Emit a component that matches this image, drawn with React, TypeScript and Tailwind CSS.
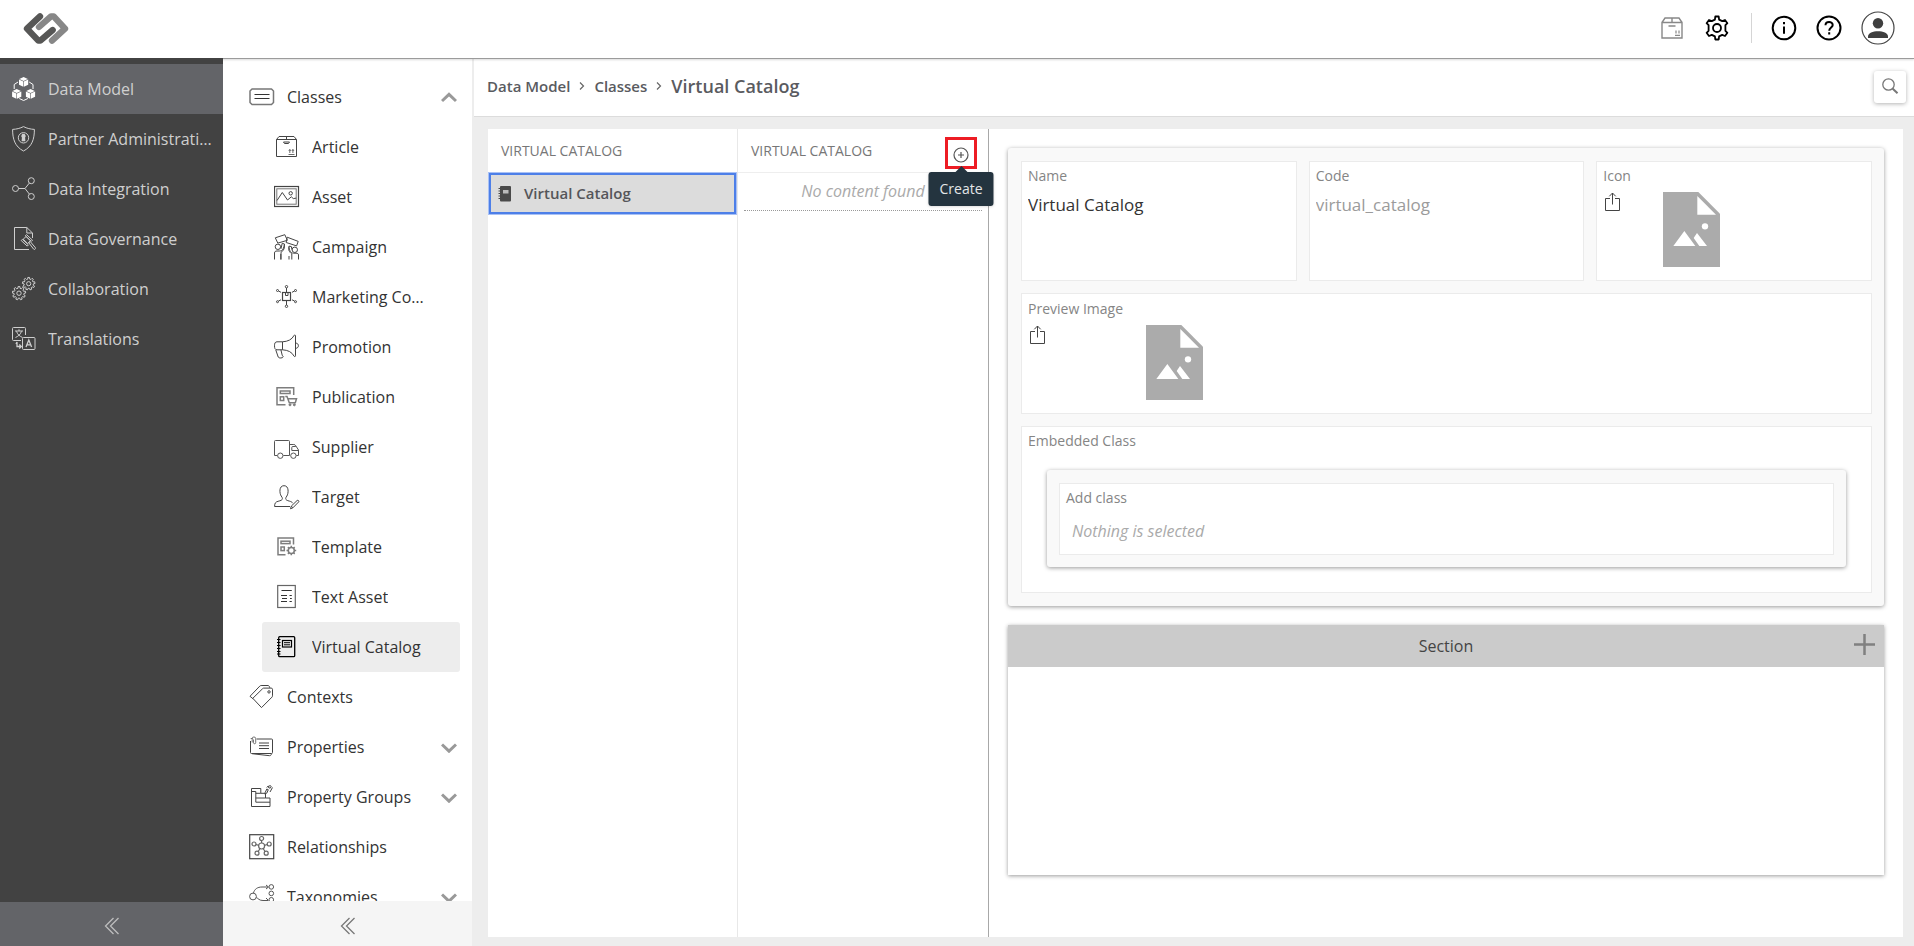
import { useState } from "react";
import type { ReactNode } from "react";

const FONT = "font-['Open_Sans','Noto_Sans',sans-serif]";

function gearPath(cx: number, cy: number, outer: number, inner: number, teeth: number) {
  const points: string[] = [];
  const step = (Math.PI * 2) / teeth;
  for (let i = 0; i < teeth; i++) {
    const a = i * step - Math.PI / 2;
    const corners: [number, number][] = [
      [inner, a - step * 0.3],
      [outer, a - step * 0.2],
      [outer, a + step * 0.2],
      [inner, a + step * 0.3],
    ];
    for (const [r, t] of corners) {
      points.push(`${(cx + r * Math.cos(t)).toFixed(2)} ${(cy + r * Math.sin(t)).toFixed(2)}`);
    }
  }
  return `M${points.join("L")}Z`;
}

function Glyph({ children, className = "text-[#444]" }: { children: ReactNode; className?: string }) {
  return (
    <svg
      viewBox="0 0 26 26"
      fill="none"
      stroke="currentColor"
      strokeWidth="1"
      aria-hidden="true"
      className={`h-[26px] w-[26px] shrink-0 ${className}`}
    >
      {children}
    </svg>
  );
}

function NavGlyph({ children }: { children: ReactNode }) {
  return (
    <svg viewBox="0 0 24 26" fill="none" stroke="currentColor" strokeWidth="1" aria-hidden="true" className="h-[26px] w-6 shrink-0">
      {children}
    </svg>
  );
}

/* ---------- main navigation icons ---------- */

function Cube({ x, y }: { x: number; y: number }) {
  return (
    <g stroke="none" fill="#fff">
      <path d={`M${x} ${y - 5}l4.2 1.9l-4.2 2l-4.2-2z`} />
      <path d={`M${x - 4.6} ${y - 2.5}l4.3 2v5.2l-4.3-2z`} />
      <path d={`M${x + 4.6} ${y - 2.5}l-4.3 2v5.2l4.3-2z`} />
    </g>
  );
}

const DataModelIcon = () => (
  <NavGlyph>
    <g stroke="#fff">
      <path d="M6 6L2.200 8.500V13M17.200 6l3.800 2.500V13M7.300 22.500L11.600 24.500l4.300-2" />
    </g>
    <Cube x={11.6} y={6} />
    <Cube x={4.7} y={18} />
    <Cube x={18.5} y={18} />
  </NavGlyph>
);

const PartnerIcon = () => (
  <NavGlyph>
    <path d="M11.5 .6C8 2.400 4.500 3.200 .6 3.400C.6 13 2.800 20.500 11.500 25C20.200 20.500 22.400 13 22.400 3.400C18.500 3.200 15 2.400 11.500 .6Z" />
    <circle cx="11.5" cy="11.8" r="5.2" />
    <path d="M11.5 7.8a2.200 2.200 0 0 1 1.600 3.700l.3 3.800h-3.800l.3-3.800a2.200 2.200 0 0 1 1.600-3.700z" fill="currentColor" stroke="none" />
  </NavGlyph>
);

const IntegrationIcon = () => (
  <NavGlyph>
    <circle cx="3.5" cy="12.5" r="3" />
    <circle cx="19.3" cy="4.7" r="3" />
    <circle cx="19.3" cy="20.5" r="3" />
    <path d="M6.5 12.5H13l4.300-5.400M13 12.5l4.300 5.500" />
  </NavGlyph>
);

const GovernanceIcon = () => (
  <NavGlyph>
    <path d="M20.5 12V7L14.800 1.500H2.500v22H17" />
    <path d="M14.800 1.500V7h5.700" />
    <path d="M13.300 9.800l1.200-1.200 6 5.600-1.200 1.200zM9.200 14.500l1.200-1.200 6 5.600-1.200 1.200zM11.200 13.200l2.900-2.700 4.400 4.200-2.900 2.800zM16.800 16.800l1.400-1.300 5.200 6.200c.8 1-.9 2.400-1.800 1.400z" />
  </NavGlyph>
);

const CollaborationIcon = () => (
  <NavGlyph>
    <path d={gearPath(7, 17.2, 6.7, 5, 9)} />
    <circle cx="7" cy="17.2" r="2.2" />
    <path d={gearPath(16.7, 7.7, 6.3, 4.7, 9)} />
    <circle cx="16.7" cy="7.7" r="2.1" />
  </NavGlyph>
);

const TranslationsIcon = () => (
  <NavGlyph>
    <path d="M13.500 9V2.500a1 1 0 0 0-1-1h-11a1 1 0 0 0-1 1v11a1 1 0 0 0 1 1H9" />
    <rect x="10.5" y="11.5" width="12.5" height="12" rx="1" />
    <path d="M3 5h8M7 3.300V5M4.500 5.200c.8 3 3 5 6 6.300M9.500 5.200c-.8 3-3 5-6 6.300" />
    <path d="M14 21l2.800-7 2.800 7M15 18.800h3.600" strokeWidth="1.3" />
    <path d="M5 16v4.500h3.500M7.300 18.500l2 2-2 2M5 16l-1 2" strokeWidth="1.3" />
  </NavGlyph>
);

/* ---------- class tree icons ---------- */

const ClassesIcon = () => (
  <Glyph>
    <path d="M3 5h19.500l2 2v11.500l-2 2H3l-2-2V7z" stroke="#777" strokeWidth="1.5" strokeLinejoin="round" />
    <path d="M5.500 10.500h15M5.500 14.500h15" stroke="#333" />
  </Glyph>
);

const ArticleIcon = () => (
  <Glyph>
    <path d="M2.500 5.500h20v17h-20zM2.500 5.500L5 2.500h15l2.500 3M12.500 2.500v3" />
    <path d="M9.500 8h6l-1 1.500h-4z" />
    <path d="M14.500 20.500h6M15.800 19v-3.500M18.900 19v-3.500M14.800 16.800l1-1.300 1 1.300M17.900 16.800l1-1.300 1 1.300" strokeWidth=".8" />
  </Glyph>
);

const AssetIcon = () => (
  <Glyph>
    <rect x=".5" y="2.5" width="24" height="20" strokeWidth="1.2" />
    <rect x="2.8" y="4.8" width="19.4" height="15.4" stroke="#777" />
    <path d="M3 16.500L8.300 8.500l5.200 7.500 3.800-3.200 2 1.800 3-.5" />
    <circle cx="16.7" cy="9.3" r="1.7" />
  </Glyph>
);

const CampaignIcon = () => (
  <Glyph>
    <path d="M1.300 3.800L10.800 .7l2.600 5.600-9.600 2.800zM13.200 3.200l11 4.200-1.600 4.500-10.400-3.400z" />
    <circle cx="3.9" cy="12.8" r="2.7" />
    <circle cx="20.8" cy="15.8" r="2.7" />
    <path d="M.5 25.500V19c0-1.500 1-2 2.500-2h2.500c3 0 4.300-2.500 5-7l-2.300-.7-1.200 5.500M10.300 10.500c.6 3.500-.5 6-3.300 7.800v7.200" />
    <path d="M24.500 25.500V21c0-1.500-1-1.800-2.500-1.800h-2.500c-2.700 0-4.300-2.500-4.500-7l2.300 .3 .7 3.200M15 12.500c-1.200 3 .3 5.500 2.800 7.500v5.500" />
    <path d="M6.800 20v5.500M15 22v3.500" />
  </Glyph>
);

const MarketingIcon = () => (
  <Glyph>
    <rect x="8.5" y="8.5" width="8" height="8" strokeWidth="1.2" />
    <path d="M11.500 9v2.500h2.500V9M12.500 8V4M12.500 17v4M7 8.300L4.500 7M18 8.300L20.500 7M7 15.800L4.500 17M18 15.800l2.500 1.200" />
    <circle cx="12.5" cy="2.7" r="1.2" />
    <circle cx="12.5" cy="22.3" r="1.2" />
    <circle cx="3.5" cy="6.5" r="1" />
    <circle cx="21.5" cy="6.5" r="1" />
    <circle cx="3.5" cy="17.7" r="1" />
    <circle cx="21.5" cy="17.7" r="1" />
  </Glyph>
);

const PromotionIcon = () => (
  <Glyph>
    <path d="M8.500 7.800H3C1 7.800 .5 9.500 .5 11.800S1 15.800 3 15.800h5.500zM8.500 7.800C14 7.500 18 5.500 20 1.500c.3-.7 1.500-.8 1.500 .3v20c0 1-1.200 1-1.500 .3-2-4-6-6-11.500-6.300" />
    <path d="M21.700 9c1.700 .3 2.700 1.200 2.700 2.700s-1 2.400-2.700 2.700M1.800 16l2.400 7c.4 1.500 5 1.300 5-.3l-1-1.500-1.300-5.400" />
  </Glyph>
);

const PublicationIcon = () => (
  <Glyph className="text-[#7d7d7d]">
    <g strokeWidth="1.5">
      <path d="M19.700 11V3.800H3v17h8.500" />
      <rect x="6.3" y="7" width="9.7" height="2.5" />
      <rect x="6.3" y="12.8" width="3.4" height="3.7" />
      <path d="M11.300 12.500h1.700l2.300 6.200h6l1.200-4H14" />
    </g>
    <circle cx="16" cy="20.8" r="1" fill="currentColor" />
    <circle cx="20.3" cy="20.8" r="1" fill="currentColor" />
  </Glyph>
);

const SupplierIcon = () => (
  <Glyph className="text-[#555]">
    <path d="M3.300 21.500H.5V7.500c0-.7 .3-1 1-1h13c.7 0 1 .3 1 1v14H9.300M15.500 10.500h4.300c1 0 1.500 .5 2 1.300l2.700 4.200v5.500h-2.200M21.800 12.500h-3c-.7 0-1 .3-1 1v3h6.700" />
    <circle cx="6.3" cy="21.7" r="2.7" />
    <circle cx="19.4" cy="21.7" r="2.7" />
  </Glyph>
);

const TargetIcon = () => (
  <Glyph>
    <path d="M16 22.500H.6c0-3.500 1-4.500 3.500-5.200 2.600-.7 4.300-1.200 4.300-2.700 0-1-.5-1.500-1.200-2.600C5.500 9.500 4.700 1.700 10 1.700S14.500 9.500 12.900 12c-.7 1.100-1.200 1.600-1.200 2.600 0 1.300 1.300 1.900 3.600 2.500 1.800 .5 3 1 3.200 2" />
    <path d="M16.500 24.800l.8-2.700 5.800-5.600c1-.7 2.200 .5 1.600 1.400l-5.800 5.900zM17.300 22.100l1.600 1.700" />
  </Glyph>
);

const TemplateIcon = () => (
  <Glyph className="text-[#7d7d7d]">
    <g strokeWidth="1.5">
      <path d="M19.500 10.500V4H4v16.700h7.500" />
      <rect x="7" y="7.2" width="9" height="2.4" />
      <rect x="7" y="13" width="3.3" height="3.6" />
      <circle cx="17.3" cy="16.5" r="3" />
      <path d="M17.300 11.700v2M17.300 19.300v2M12.500 16.500h2M20.200 16.500h2M13.900 13.100l1.400 1.400M19.300 18.500l1.400 1.400M20.700 13.100l-1.400 1.400M15.300 18.500l-1.400 1.400" />
    </g>
  </Glyph>
);

const TextAssetIcon = () => (
  <Glyph>
    <rect x="3.7" y="1.5" width="17.6" height="22" stroke="#666" strokeWidth="1.2" />
    <path d="M7.500 6.500h10.300M7 11.500h6M15.500 11.500h2.300M8 14.500h5M16 14.500h1.800M7 17.500h6M15.500 17.500h2.300" stroke="#333" />
  </Glyph>
);

const CatalogIcon = () => (
  <Glyph className="text-black">
    <rect x="4.7" y="2.7" width="16" height="20" rx="1" strokeWidth="1.3" />
    <rect x="8.5" y="6.5" width="9" height="6.5" strokeWidth="1.2" />
    <path d="M10 8.700h6M10 10.800h6M3 5.500h3.500M3 8.500h3.500M3 11.500h3.500M3 14.500h3.500M3 17.500h3.500M3 20h3.500" />
  </Glyph>
);

const ContextsIcon = () => (
  <Glyph>
    <path d="M12.500 23.600L3.800 14.300 13.700 4.600c.4-.4 .7-.5 1.200-.5h7.300c.8 0 1.300 .5 1.300 1.200v6.500c0 .5-.2 1-.5 1.300z" />
    <path d="M4.300 15L1 12.300 10.800 2.100c.5-.4 .8-.6 1.300-.6h7c.8 0 1.200 .6 1.700 2.300" />
    <circle cx="20" cy="7.9" r="1.2" />
  </Glyph>
);

const PropertiesIcon = () => (
  <Glyph>
    <path d="M7.500 5h15c.7 0 1 .3 1 1v12.500c0 .7-.3 1-1 1h-20c-.7 0-1-.3-1-1V7" />
    <path d="M3 19.700l17.500 2c1 .1 1.700-.5 2-2" />
    <path d="M10 9h10M10 11.700h10M10 14.500h10" />
    <path d="M3.200 8.500V4.700a1.700 1.700 0 0 1 3.500 0v4.100c0 1.300-2.200 1.300-2.200 0V5.500M1.700 4.500h2" stroke="#666" strokeWidth=".9" />
  </Glyph>
);

const PropertyGroupsIcon = () => (
  <Glyph>
    <path d="M2.500 22.500v-18h9.300v4.800h4.700v4.700h4.500v8.500zM2.500 7.500h4.300v10.700H21M6.800 9.300h5M6.800 14h9.700" />
    <path d="M16.200 8.500l1.600-3.500 1.500 .7-1.500 3.400-1.900 1zM19 3l2-1.500 1.300 1-1.200 1.800zM21 8l2.500-4.500M17.800 3.500l1.500-1.700" />
  </Glyph>
);

const RelationshipsIcon = () => (
  <Glyph>
    <rect x=".7" y=".7" width="24" height="24" strokeWidth="1.2" />
    <g stroke="#666" strokeWidth="1.2">
      <circle cx="12.6" cy="12" r="3" />
      <circle cx="12.6" cy="4.5" r="2" />
      <circle cx="5" cy="10" r="2" />
      <circle cx="20.2" cy="10" r="2" />
      <circle cx="8" cy="19.2" r="2" />
      <circle cx="17.2" cy="19.2" r="2" />
      <path d="M12.600 6.500V9M7 10.500l2.700 .8M18.200 10.500l-2.700 .8M9.200 17.500l1.700-2.700M16 17.500l-1.700-2.700" />
    </g>
  </Glyph>
);

const TaxonomiesIcon = () => (
  <Glyph className="text-[#555]">
    <circle cx="4" cy="12.5" r="3.4" />
    <circle cx="22.3" cy="2.9" r="2.3" />
    <circle cx="22.3" cy="9.4" r="2.3" />
    <circle cx="22.3" cy="15.8" r="2.3" />
    <path d="M4.500 9C5.500 5 8.500 3 13 3h6M17 1l2.500 2L17 5M7.400 13.500c2 1 2.600 3 6.600 3h5M17 14l2.500 2.500" />
  </Glyph>
);

const Chevron = ({ up = false }: { up?: boolean }) => (
  <svg viewBox="0 0 16 12" className="h-3 w-4" fill="none" stroke="#999" strokeWidth="3" aria-hidden="true">
    <path d={up ? "M1 10L8 3.300L15 10" : "M1 3.500L8 10.200L15 3.500"} />
  </svg>
);

const DoubleChevron = ({ className }: { className: string }) => (
  <svg viewBox="0 0 16 18" className={`h-[18px] w-4 ${className}`} fill="none" stroke="currentColor" strokeWidth="1.3" aria-hidden="true">
    <path d="M9.500 1L1.500 9l8 8M14.500 1L6.500 9l8 8" />
  </svg>
);

const UploadIcon = () => (
  <svg viewBox="0 0 16 20" className="h-5 w-4" fill="none" stroke="#444" strokeWidth="1" aria-hidden="true">
    <path d="M5 6.500H.5V18.500h14V6.500H10" />
    <path d="M7.500 12.500V1M4.300 4.300L7.500 1l3.200 3.300" />
  </svg>
);

const ImagePlaceholder = () => (
  <svg viewBox="0 0 171 225" className="h-[75px] w-[57px]" aria-hidden="true">
    <path d="M0 0H106L171 65V225H0Z" fill="#ababab" />
    <path d="M103 12V68H159Z" fill="#fff" />
    <path d="M31 162L64 117L97 162ZM92 138L102 123L132 162H109Z" fill="#fff" />
    <circle cx="126" cy="103" r="9.5" fill="#fff" />
  </svg>
);

/* ---------- page parts ---------- */

const mainNav = [
  { label: "Data Model", Icon: DataModelIcon },
  { label: "Partner Administration", Icon: PartnerIcon },
  { label: "Data Integration", Icon: IntegrationIcon },
  { label: "Data Governance", Icon: GovernanceIcon },
  { label: "Collaboration", Icon: CollaborationIcon },
  { label: "Translations", Icon: TranslationsIcon },
];

const classItems = [
  { label: "Article", Icon: ArticleIcon },
  { label: "Asset", Icon: AssetIcon },
  { label: "Campaign", Icon: CampaignIcon },
  { label: "Marketing Content", Icon: MarketingIcon },
  { label: "Promotion", Icon: PromotionIcon },
  { label: "Publication", Icon: PublicationIcon },
  { label: "Supplier", Icon: SupplierIcon },
  { label: "Target", Icon: TargetIcon },
  { label: "Template", Icon: TemplateIcon },
  { label: "Text Asset", Icon: TextAssetIcon },
  { label: "Virtual Catalog", Icon: CatalogIcon },
];

const groups = [
  { label: "Contexts", Icon: ContextsIcon, expandable: false },
  { label: "Properties", Icon: PropertiesIcon, expandable: true },
  { label: "Property Groups", Icon: PropertyGroupsIcon, expandable: true },
  { label: "Relationships", Icon: RelationshipsIcon, expandable: false },
  { label: "Taxonomies", Icon: TaxonomiesIcon, expandable: true },
];

function TopBar() {
  return (
    <header className="relative z-10 flex h-[59px] shrink-0 items-center justify-between border-b border-[#9b9b9b] bg-white pr-[19px] pb-[2px] pl-[23px] shadow-[0_1px_2px_rgba(0,0,0,0.15)]">
      <a href="#home" aria-label="Home">
        <svg viewBox="68 33 138 99" className="h-[33px] w-[46px]" fill="none" strokeWidth="19" strokeLinejoin="round" strokeLinecap="round" aria-hidden="true">
          <path d="M155 119L194 83L160 46H152L116 78" stroke="#878787" />
          <path d="M119 46L80 83L114 119H120L157 87" stroke="#575756" />
        </svg>
      </a>
      <div className="flex items-center">
        <button aria-label="Packages" className="mr-[21px]">
          <svg viewBox="0 0 22 22" className="h-[22px] w-[22px]" fill="none" stroke="#888" strokeWidth="1.4" aria-hidden="true">
            <path d="M1 5.500h20V21H1zM1 5.500L4 1h14l3 4.500M11 1v4.500M7.500 9h7" />
            <path d="M14 18.300h5M15 16.500v-3M18 16.500v-3" strokeWidth="1.2" />
          </svg>
        </button>
        <button aria-label="Settings" className="mr-[21px]">
          <svg viewBox="0 0 26 26" className="h-[26px] w-[26px]" fill="none" stroke="#000" strokeWidth="1.8" strokeLinejoin="round" aria-hidden="true">
            <path d="M10.900 4.600L11.300 1.500h3.400l.4 3.100 3.100 1.500 2.800-1.100 2.400 3.200-2 2v5.600l2 2-2.400 3.200-2.800-1.100-3.100 1.500-.4 3.100h-3.400l-.4-3.100-3.100-1.500L5 21l-2.400-3.200 2-2v-5.600l-2-2L5 5l2.800 1.100z" />
            <circle cx="13" cy="13" r="4" />
          </svg>
        </button>
        <span className="mr-[19px] h-[30px] w-px bg-[#d5d5d5]" />
        <button aria-label="Information" className="mr-[19px]">
          <svg viewBox="0 0 26 26" className="h-[26px] w-[26px]" fill="none" stroke="#000" strokeWidth="2" aria-hidden="true">
            <circle cx="13" cy="13" r="11.3" />
            <path d="M13 11.500v7.200M13 7v2.200" />
          </svg>
        </button>
        <button aria-label="Help" className="mr-[19px]">
          <svg viewBox="0 0 26 26" className="h-[26px] w-[26px]" fill="none" stroke="#000" strokeWidth="2" aria-hidden="true">
            <circle cx="13" cy="13" r="11.5" />
            <path d="M9.500 10.300c0-4.600 7.200-4.400 7.200-.3 0 2.500-3.500 2.600-3.500 5.800M13.200 17.200v2.300" />
          </svg>
        </button>
        <button aria-label="Account">
          <svg viewBox="0 0 34 34" className="h-[34px] w-[34px]" aria-hidden="true">
            <circle cx="17" cy="17" r="16" fill="#fff" stroke="#444" strokeWidth="1.2" />
            <circle cx="17" cy="12.2" r="5.2" fill="#3f3f3f" />
            <path d="M7 27v-1.500c0-7 20-7 20 0V27z" fill="#3f3f3f" />
          </svg>
        </button>
      </div>
    </header>
  );
}

function MainNav() {
  return (
    <nav aria-label="Main" className="z-20 -mt-px flex w-[223px] shrink-0 flex-col justify-between bg-[#424242]">
      <ul className="pt-[6px]">
        {mainNav.map(({ label, Icon }, i) => (
          <li key={label}>
            <a href="#nav" className={`flex h-[50px] items-center gap-3 pr-2 pl-3 text-base text-[#cfcfcf] ${i === 0 ? "bg-[#636468]" : ""}`}>
              <Icon />
              <span className="truncate">{label}</span>
            </a>
          </li>
        ))}
      </ul>
      <button aria-label="Collapse main navigation" className="flex h-11 items-center justify-center bg-[#636468] pt-1">
        <DoubleChevron className="text-[#bdbdbd]" />
      </button>
    </nav>
  );
}

function TreeNav() {
  return (
    <nav aria-label="Data model" className="flex w-[249px] shrink-0 flex-col bg-white text-base text-[#333]">
      <div className="min-h-0 flex-1 overflow-hidden pt-[13px] pr-3">
        <button className="flex h-[50px] w-full items-center gap-3 pr-[3px] pl-[26px]">
          <ClassesIcon />
          <span className="flex-1 text-left">Classes</span>
          <Chevron up />
        </button>
        <ul className="pl-[39px]">
          {classItems.map(({ label, Icon }) => (
            <li key={label}>
              <a
                href="#class"
                className={`flex h-[50px] items-center gap-3 rounded-[3px] pr-8 pl-3 ${label === "Virtual Catalog" ? "bg-[#ededed]" : ""}`}
              >
                <Icon />
                <span className="truncate">{label}</span>
              </a>
            </li>
          ))}
        </ul>
        {groups.map(({ label, Icon, expandable }) => (
          <button key={label} className="flex h-[50px] w-full items-center gap-3 pr-[3px] pl-[26px]">
            <Icon />
            <span className="flex-1 text-left">{label}</span>
            {expandable && <Chevron />}
          </button>
        ))}
      </div>
      <button aria-label="Collapse tree" className="flex h-[45px] shrink-0 items-center justify-center bg-[#f5f5f5] pt-1">
        <DoubleChevron className="text-[#777]" />
      </button>
    </nav>
  );
}

const CrumbArrow = () => (
  <svg viewBox="0 0 6 10" className="h-[10px] w-[6px]" fill="none" stroke="#666" strokeWidth="1.2" aria-hidden="true">
    <path d="M1 1.500L4.500 5L1 8.500" />
  </svg>
);

function Breadcrumbs() {
  return (
    <div className="flex h-[58px] shrink-0 items-center justify-between border-b border-[#dcdcdc] bg-white pr-2 pb-[2px] pl-[13px]">
      <nav aria-label="Breadcrumb" className="flex items-center gap-[9px] pb-px font-semibold text-[#5a5b5f]">
        <a href="#data-model" className="text-[15px]">Data Model</a>
        <CrumbArrow />
        <a href="#classes" className="text-[15px]">Classes</a>
        <CrumbArrow />
        <h1 className="text-lg">Virtual Catalog</h1>
      </nav>
      <button aria-label="Search" className="flex h-8 w-8 items-center justify-center rounded-[3px] bg-white pb-px shadow-[0_1px_4px_rgba(0,0,0,0.3)]">
        <svg viewBox="0 0 18 18" className="h-[18px] w-[18px]" fill="none" stroke="#777" aria-hidden="true">
          <circle cx="7.5" cy="7.5" r="5.7" strokeWidth="1.3" />
          <path d="M11.500 11.500l5 4.800" strokeWidth="2" />
        </svg>
      </button>
    </div>
  );
}

const COLUMN_TITLE = "flex h-[43px] items-center pt-px text-sm text-[#777]";

function ClassColumns() {
  return (
    <>
      <section className="flex w-[250px] shrink-0 flex-col border-r border-[#e8e8e8]">
        <h2 className={`${COLUMN_TITLE} pl-[13px]`}>VIRTUAL CATALOG</h2>
        <div className="px-px pt-px">
          <button className="flex h-[41px] w-full items-center border-2 border-[#4d7fe8] bg-[#dcdcdc] pl-[7px] text-left text-[15px] font-semibold text-[#55565a] outline outline-[#a9c1f5]">
            <svg viewBox="0 0 14 16" className="mr-3 h-4 w-[14px]" aria-hidden="true">
              <rect x="2" y="0" width="11" height="15.5" rx="1" fill="#4a4a4a" />
              <rect x="5" y="4" width="5.5" height="3.5" fill="#bbb" />
              <path d="M.5 2.500h2M.5 5h2M.5 7.500h2M.5 10h2M.5 12.500h2" stroke="#4a4a4a" />
            </svg>
            Virtual Catalog
          </button>
        </div>
      </section>
      <section className="w-[251px] shrink-0 border-r border-[#a8a8a8]">
        <div className="flex h-[44px] items-start justify-between border-b border-[#eee] pr-[11px] pl-[13px]">
          <h2 className={COLUMN_TITLE}>VIRTUAL CATALOG</h2>
          <div className="relative mt-2 border-3 border-[#ed1c24]">
            <button aria-label="Create" aria-describedby="create-tip" className="flex h-[26px] w-[26px] items-center justify-center pt-1">
              <svg viewBox="0 0 16 16" className="h-4 w-4" fill="none" stroke="#555" aria-hidden="true">
                <circle cx="8" cy="8" r="7" strokeWidth="1.2" />
                <path d="M8 5v6M5 8h6" strokeWidth="1.2" />
              </svg>
            </button>
            <div id="create-tip" role="tooltip" className="absolute top-8 left-1/2 z-30 -translate-x-1/2 rounded-[3px] bg-[#24343f] px-[11px] py-[7px] text-sm font-medium text-[#e3e6e8] shadow-sm">
              <span className="absolute -top-[6px] left-1/2 h-0 w-0 -translate-x-1/2 border-x-[7px] border-b-[7px] border-x-transparent border-b-[#24343f]" />
              Create
            </div>
          </div>
        </div>
        <p className="mx-[6px] flex h-[38px] items-center justify-center border-b border-dotted border-[#999] pb-[2px] text-base text-[#aaa] italic">
          No content found
        </p>
      </section>
    </>
  );
}

const BOX = "border border-[#ebebeb] bg-white px-[6px] pt-1";
const LABEL = "block text-sm leading-5 text-[#858585]";
const CARD = "rounded-[3px] bg-[#f9f9f9] shadow-[0_1px_4px_rgba(0,0,0,0.4)]";
const FIELD = "mt-[7px] block h-6 w-full bg-transparent text-[17px] outline-none";

function Details() {
  const [name, setName] = useState("Virtual Catalog");
  return (
    <section className="min-w-0 flex-1 p-[19px]">
      <div className={`${CARD} p-[13px] pr-3`}>
        <div className="grid grid-cols-3 gap-3">
          <div className={`${BOX} h-[120px]`}>
            <label htmlFor="class-name" className={LABEL}>Name</label>
            <input
              id="class-name"
              value={name}
              onChange={(e) => setName(e.target.value)}
              className={`${FIELD} text-[#333]`}
            />
          </div>
          <div className={`${BOX} h-[120px]`}>
            <label htmlFor="class-code" className={LABEL}>Code</label>
            <input id="class-code" value="virtual_catalog" readOnly className={`${FIELD} text-[#9b9b9b]`} />
          </div>
          <div className={`${BOX} h-[120px]`}>
            <span className={LABEL}>Icon</span>
            <div className="mt-[6px] flex items-start gap-[42px] pl-[2px]">
              <button aria-label="Upload icon"><UploadIcon /></button>
              <ImagePlaceholder />
            </div>
          </div>
          <div className={`${BOX} col-span-3 h-[121px]`}>
            <span className={`${LABEL} pt-px`}>Preview Image</span>
            <div className="mt-[6px] flex items-start gap-[100px] pl-[2px]">
              <button aria-label="Upload preview image"><UploadIcon /></button>
              <ImagePlaceholder />
            </div>
          </div>
          <div className={`${BOX} col-span-3 pb-[25px]`}>
            <span className={LABEL}>Embedded Class</span>
            <div className={`${CARD} mx-[19px] mt-[19px] px-3 pt-[13px] pb-3`}>
              <div className={`${BOX} pb-[11px]`}>
                <span className={LABEL}>Add class</span>
                <p className="mt-[11px] pl-[6px] text-base text-[#aaa] italic">Nothing is selected</p>
              </div>
            </div>
          </div>
        </div>
      </div>
      <div className="mt-[19px] min-h-[250px] bg-white shadow-[0_1px_4px_rgba(0,0,0,0.4)]">
        <div className="flex h-[42px] items-center bg-[#cbcbcb] pr-[9px]">
          <h2 className="flex-1 pl-[30px] text-center text-base text-[#444]">Section</h2>
          <button aria-label="Add section" className="pb-[3px]">
            <svg viewBox="0 0 21 21" className="h-[21px] w-[21px]" stroke="#808080" strokeWidth="2.5" aria-hidden="true">
              <path d="M10.500 0v21M0 10.500h21" />
            </svg>
          </button>
        </div>
      </div>
    </section>
  );
}

export default function App() {
  return (
    <div className={`flex h-screen flex-col overflow-hidden bg-[#ededed] ${FONT}`}>
      <TopBar />
      <div className="flex min-h-0 flex-1">
        <MainNav />
        <TreeNav />
        <main className="flex min-w-0 flex-1 flex-col pl-[2px]">
          <Breadcrumbs />
          <div className="mt-3 mr-[11px] mb-[9px] ml-[14px] flex min-h-0 flex-1 bg-white">
            <ClassColumns />
            <Details />
          </div>
        </main>
      </div>
    </div>
  );
}
